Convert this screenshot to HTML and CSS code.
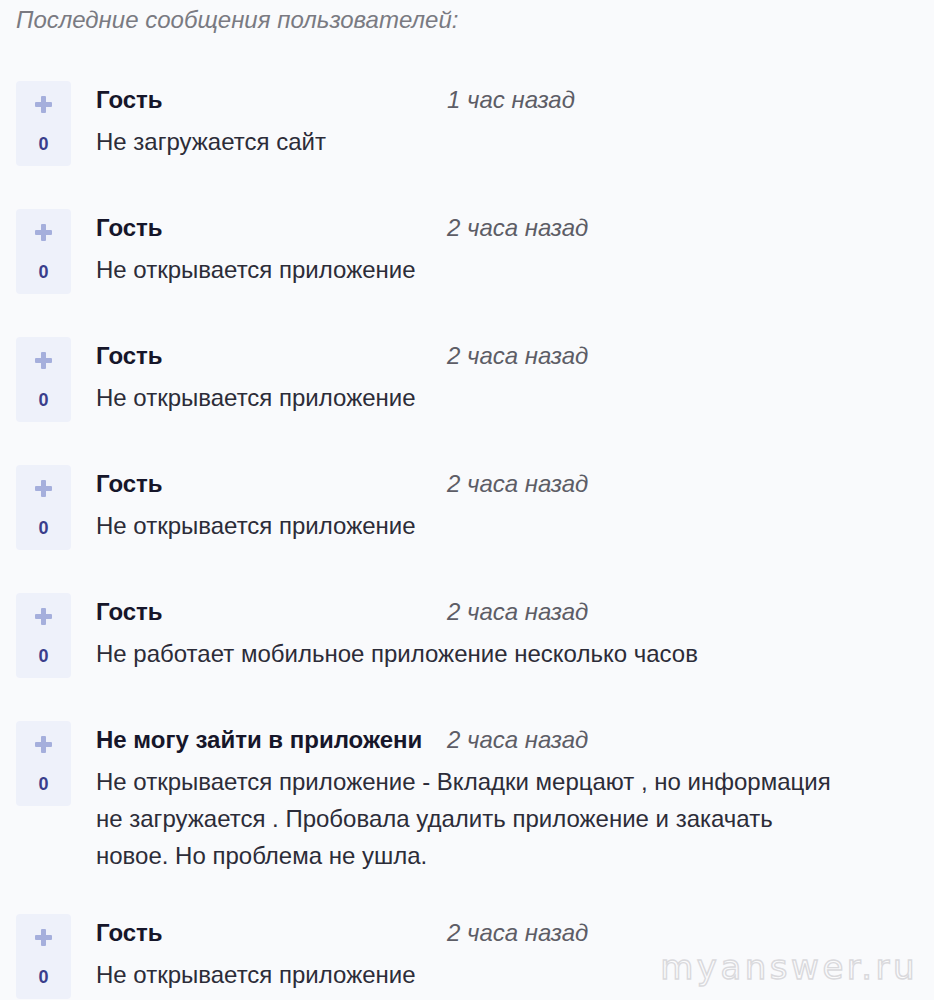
FILE: index.html
```html
<!DOCTYPE html>
<html lang="ru">
<head>
<meta charset="utf-8">
<link rel="stylesheet" href="styles.css">
</head>
<body>
<div class="page">
  <div class="header">Последние сообщения пользователей:</div>
  <div class="list">
    <div class="row">
      <div class="vote"><span class="plus"></span><span class="count">0</span></div>
      <div class="content">
        <div class="meta"><span class="name">Гость</span><span class="time">1 час назад</span></div>
        <div class="text">Не загружается сайт</div>
      </div>
    </div>
    <div class="row">
      <div class="vote"><span class="plus"></span><span class="count">0</span></div>
      <div class="content">
        <div class="meta"><span class="name">Гость</span><span class="time">2 часа назад</span></div>
        <div class="text">Не открывается приложение</div>
      </div>
    </div>
    <div class="row">
      <div class="vote"><span class="plus"></span><span class="count">0</span></div>
      <div class="content">
        <div class="meta"><span class="name">Гость</span><span class="time">2 часа назад</span></div>
        <div class="text">Не открывается приложение</div>
      </div>
    </div>
    <div class="row">
      <div class="vote"><span class="plus"></span><span class="count">0</span></div>
      <div class="content">
        <div class="meta"><span class="name">Гость</span><span class="time">2 часа назад</span></div>
        <div class="text">Не открывается приложение</div>
      </div>
    </div>
    <div class="row">
      <div class="vote"><span class="plus"></span><span class="count">0</span></div>
      <div class="content">
        <div class="meta"><span class="name">Гость</span><span class="time">2 часа назад</span></div>
        <div class="text">Не работает мобильное приложение несколько часов</div>
      </div>
    </div>
    <div class="row">
      <div class="vote"><span class="plus"></span><span class="count">0</span></div>
      <div class="content">
        <div class="meta"><span class="name">Не могу зайти в приложени</span><span class="time">2 часа назад</span></div>
        <div class="text">Не открывается приложение - Вкладки мерцают , но информация не загружается . Пробовала удалить приложение и закачать новое. Но проблема не ушла.</div>
      </div>
    </div>
    <div class="row">
      <div class="vote"><span class="plus"></span><span class="count">0</span></div>
      <div class="content">
        <div class="meta"><span class="name">Гость</span><span class="time">2 часа назад</span></div>
        <div class="text">Не открывается приложение</div>
      </div>
    </div>
  </div>
  <div class="watermark">myanswer.ru</div>
</div>
</body>
</html>
```
FILE: styles.css
```css
html, body {
  margin: 0;
  padding: 0;
  background: #f9fafc;
}
body {
  font-family: "Liberation Sans", Arial, sans-serif;
  height: 1000px;
  overflow: hidden;
}
.page {
  position: relative;
  height: 1000px;
  padding: 0 16px;
}
.header {
  font-size: 24px;
  font-style: italic;
  color: #7a7a82;
  line-height: 40px;
  margin-bottom: 41px;
}
.row {
  display: flex;
  align-items: flex-start;
  gap: 25px;
  min-height: 88px;
  margin-bottom: 40px;
}
.vote {
  flex: 0 0 55px;
  height: 85px;
  background: #eef1fa;
  border-radius: 4px;
  display: flex;
  flex-direction: column;
  align-items: center;
}
.plus {
  position: relative;
  width: 17px;
  height: 17px;
  margin-top: 15px;
}
.plus::before, .plus::after {
  content: "";
  position: absolute;
  background: #a5afdc;
  border-radius: 1px;
}
.plus::before {
  left: 0; top: 6px; width: 17px; height: 5px;
}
.plus::after {
  left: 6px; top: 0; width: 5px; height: 17px;
}
.count {
  margin-top: 19px;
  font-size: 18px;
  font-weight: bold;
  color: #3a3e8c;
  line-height: 24px;
}
.content {
  flex: 0 1 745px;
}
.meta {
  display: flex;
  gap: 16px;
  line-height: 37px;
  font-size: 24px;
}
.name {
  flex: 0 0 335px;
  width: 335px;
  overflow: hidden;
  white-space: nowrap;
  font-weight: bold;
  color: #16162a;
}
.time {
  font-style: italic;
  color: #5d5d66;
}
.text {
  margin-top: 5px;
  font-size: 24px;
  line-height: 37px;
  color: #2c2c38;
}
.watermark {
  position: absolute;
  right: 16px;
  top: 942px;
  font-family: "DejaVu Sans", sans-serif;
  font-size: 34px;
  line-height: 50px;
  color: #fbfbfc;
  -webkit-text-stroke: 1.4px #d9d9dc;
  letter-spacing: 3.5px;
}
```
